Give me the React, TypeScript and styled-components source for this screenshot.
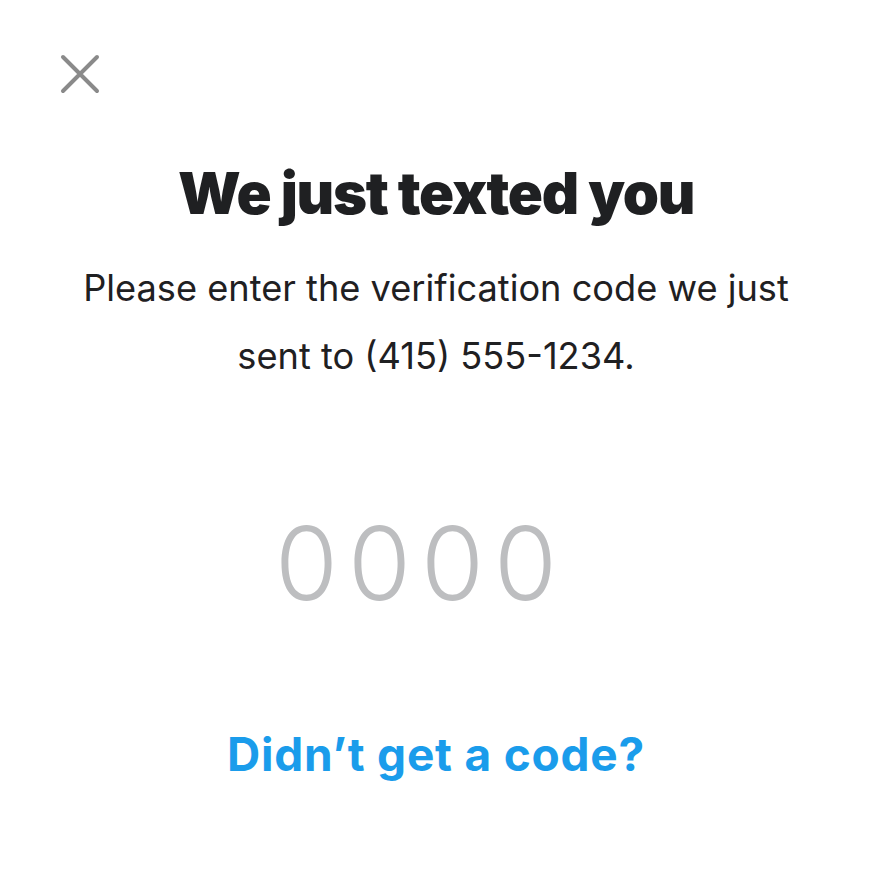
import * as React from "react";
import styled, {createGlobalStyle} from "styled-components";

const GlobalStyle = createGlobalStyle`
    html, body {
        margin: 0;
        padding: 0;
        background: #ffffff;
    }
    body {
        font-family: Inter, "Noto Sans", sans-serif;
        color: #1f2022;
    }
`;

const Screen = styled.div`
    width: 872px;
    height: 882px;
    box-sizing: border-box;
    padding: 52px 0 0;
    display: flex;
    flex-direction: column;
    align-items: center;
`;

const TopBar = styled.div`
    align-self: stretch;
    display: flex;
    padding-left: 58px;
    height: 44px;
`;

const CloseButton = styled.button`
    width: 44px;
    height: 44px;
    padding: 0;
    border: none;
    background: none;
    cursor: pointer;
    display: flex;
    align-items: center;
    justify-content: center;
`;

const Title = styled.h1`
    margin: 61px 0 0;
    font-size: 58px;
    font-weight: 900;
    letter-spacing: -1.3px;
    line-height: 72px;
    color: #1f2022;
    text-align: center;
`;

const Subtitle = styled.p`
    margin: 25px 0 0;
    max-width: 740px;
    font-size: 36.2px;
    font-weight: 400;
    line-height: 68px;
    letter-spacing: 0;
    text-align: center;
    color: #1f2022;
`;

const CodeInput = styled.div`
    margin-top: 113px;
    padding-right: 30px;
    font-size: 102px;
    font-weight: 300;
    line-height: 120px;
    letter-spacing: 10px;
    color: #bdbec0;
`;

const ResendLink = styled.a`
    margin-top: 103px;
    font-size: 46px;
    font-weight: 700;
    letter-spacing: 0.8px;
    color: #1a9ceb;
    text-decoration: none;
    cursor: pointer;
`;

export default function App() {
    return <>
        <GlobalStyle/>
        <Screen>
            <TopBar>
                <CloseButton aria-label="Close">
                    <svg width="40" height="40" viewBox="0 0 40 40">
                        <path d="M3 3 L37 37 M37 3 L3 37" stroke="#8a8a8a" strokeWidth="4" strokeLinecap="round"/>
                    </svg>
                </CloseButton>
            </TopBar>
            <Title>We just texted you</Title>
            <Subtitle>Please enter the verification code we just sent to (415) 555-1234.</Subtitle>
            <CodeInput>0000</CodeInput>
            <ResendLink>Didn’t get a code?</ResendLink>
        </Screen>
    </>;
}
